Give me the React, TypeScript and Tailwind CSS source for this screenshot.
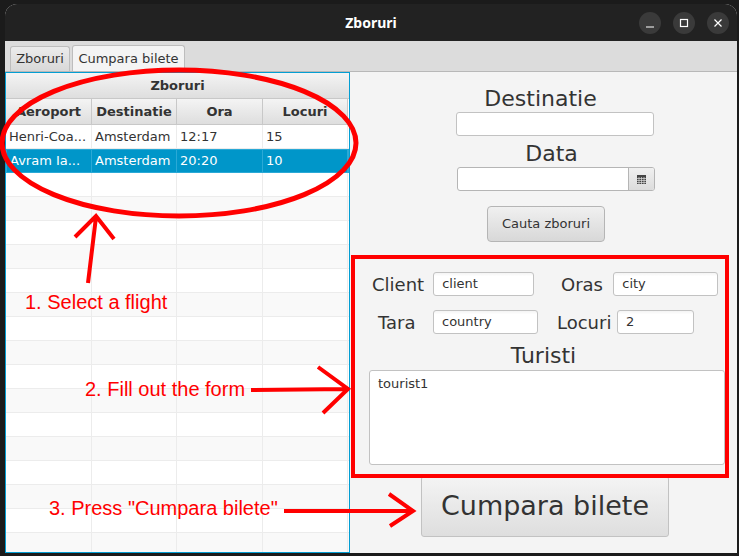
const dejavu = "font-['DejaVu_Sans',sans-serif]";

const rows = Array.from({ length: 18 });

function Field({ value, className }: { value?: string; className: string }) {
  return (
    <div className={`flex h-[24px] items-center rounded-[3px] border border-[#c2c2c2] bg-white bg-gradient-to-b from-[#f4f4f4] to-white to-[15%] pl-[8px] text-[13px] text-[#333] ${className}`}>
      {value}
    </div>
  );
}

function HeaderCell({ children, w }: { children: string; w: string }) {
  return (
    <div className={`flex h-full items-center justify-center overflow-hidden whitespace-nowrap border-r border-b border-[#c8c8c8] bg-gradient-to-b from-[#f4f4f4] to-[#dedede] text-[13px] font-bold text-[#333] ${w}`}>
      {children}
    </div>
  );
}

function Cell({ children, w, sel }: { children?: string; w: string; sel?: boolean }) {
  return (
    <div className={`flex h-full items-center whitespace-nowrap border-r pl-[3px] text-[13px] ${w} ${sel ? "border-[#2aa9d6] text-white" : "border-[#ececec] text-[#333]"}`}>
      {children}
    </div>
  );
}

const cols = ["w-[86px]", "w-[85px]", "w-[86px]", "w-[85px]"];

function Annotations() {
  return (
    <>
      <svg className="pointer-events-none absolute left-0 top-0" width="739" height="556" fill="none" stroke="#ff0000" strokeWidth="4">
        <ellipse cx="179" cy="143" rx="177" ry="73" strokeWidth="5" />
        <path d="M88 283 L96 217 M75 237 L96 216 L114 239" />
        <path d="M251 390 L348 389 M318 367 L348 389 L323 413" />
        <path d="M284 511 L412 511 M389 494 L413 511 L390 526" />
        <rect x="353" y="257" width="374" height="219" />
      </svg>
      <div className="absolute left-[25px] top-[290px] font-['Liberation_Sans',sans-serif] text-[20px] leading-[24px] text-[#ff0000]">1. Select a flight</div>
      <div className="absolute left-[85px] top-[377px] font-['Liberation_Sans',sans-serif] text-[20px] leading-[24px] text-[#ff0000]">2. Fill out the form</div>
      <div className="absolute left-[49px] top-[496px] font-['Liberation_Sans',sans-serif] text-[20px] leading-[24px] text-[#ff0000]">3. Press "Cumpara bilete"</div>
    </>
  );
}

export default function App() {
  return (
    <div className={`relative h-[556px] w-[739px] overflow-hidden bg-[#1b1b1b] pl-[5px] pr-[2px] pt-[4px] pb-[3px] ${dejavu}`}>
      <div className="flex h-full w-full flex-col overflow-hidden rounded-t-[12px] bg-[#f4f4f4]">
        <div className="relative flex h-[37px] items-center justify-center bg-[#222222] font-['Noto_Sans',sans-serif] text-[14px] font-bold text-white">
          Zboruri
          <div className="absolute right-[8px] top-[8px] flex gap-[12px]">
            <div className="flex h-[22px] w-[22px] items-center justify-center rounded-full bg-[#3a3a3a]">
              <svg width="10" height="10" viewBox="0 0 10 10"><path d="M1 9h8" stroke="#fff" strokeWidth="1.2" /></svg>
            </div>
            <div className="flex h-[22px] w-[22px] items-center justify-center rounded-full bg-[#3a3a3a]">
              <svg width="10" height="10" viewBox="0 0 10 10" fill="none"><rect x="1.5" y="1.5" width="7" height="7" stroke="#fff" strokeWidth="1.2" /></svg>
            </div>
            <div className="flex h-[22px] w-[22px] items-center justify-center rounded-full bg-[#3a3a3a]">
              <svg width="10" height="10" viewBox="0 0 10 10" fill="none"><path d="M1.5 1.5l7 7M8.5 1.5l-7 7" stroke="#fff" strokeWidth="1.2" /></svg>
            </div>
          </div>
        </div>
        <div className="flex h-[31px] items-end gap-[2px] border-b border-[#b8b8b8] bg-[#dcdcdc] pl-[5px]">
          <div className="flex h-[25px] w-[60px] items-center justify-center rounded-t-[3px] border border-b-0 border-[#bdbdbd] bg-gradient-to-b from-[#ececec] to-[#d8d8d8] text-[13px] text-[#333]">Zboruri</div>
          <div className="flex h-[26px] w-[113px] items-center justify-center rounded-t-[3px] border border-b-0 border-[#bdbdbd] bg-[#f4f4f4] text-[13px] text-[#333]">Cumpara bilete</div>
        </div>
        <div className="flex min-h-0 flex-1">
          <div className="flex h-full w-[345px] shrink-0 flex-col overflow-hidden border border-[#039ed3] bg-white">
            <div className="flex h-[26px] shrink-0 items-center justify-center border-b border-[#c8c8c8] bg-gradient-to-b from-[#f4f4f4] to-[#dedede] text-[13px] font-bold text-[#333]">Zboruri</div>
            <div className="flex h-[26px] shrink-0">
              <HeaderCell w={cols[0]}>Aeroport</HeaderCell>
              <HeaderCell w={cols[1]}>Destinatie</HeaderCell>
              <HeaderCell w={cols[2]}>Ora</HeaderCell>
              <HeaderCell w={cols[3]}>Locuri</HeaderCell>
            </div>
            <div className="flex h-[24px] shrink-0 border-b border-[#ececec]">
              <Cell w={cols[0]}>Henri-Coa...</Cell>
              <Cell w={cols[1]}>Amsterdam</Cell>
              <Cell w={cols[2]}>12:17</Cell>
              <Cell w={cols[3]}>15</Cell>
            </div>
            <div className="flex h-[24px] shrink-0 border border-[#2aa9d6] bg-[#0096c9]">
              <Cell w="w-[85px]" sel>Avram Ia...</Cell>
              <Cell w={cols[1]} sel>Amsterdam</Cell>
              <Cell w={cols[2]} sel>20:20</Cell>
              <Cell w={cols[3]} sel>10</Cell>
            </div>
            {rows.map((_, i) => (
              <div key={i} className={`flex h-[24px] shrink-0 border-b border-[#ececec] ${i % 2 === 1 ? "bg-[#f9f9f9]" : "bg-white"}`}>
                {cols.map((c) => <Cell key={c} w={c} />)}
              </div>
            ))}
          </div>
          <div className="flex min-w-0 flex-1 flex-col text-[#333]">
            <div className="mt-[14px] text-center text-[22px] leading-[26px] pr-[6px]">Destinatie</div>
            <div className="mt-[0px] ml-[106px] h-[24px] w-[198px] rounded-[3px] border border-[#c2c2c2] bg-white" />
            <div className="mt-[5px] text-center text-[22px] leading-[26px] pl-[16px]">Data</div>
            <div className="ml-[107px] flex h-[24px] w-[198px] overflow-hidden rounded-[3px] border border-[#b5b5b5] bg-white">
              <div className="flex-1" />
              <div className="flex w-[26px] items-center justify-center border-l border-[#b5b5b5] bg-gradient-to-b from-[#f0f0f0] to-[#dcdcdc]">
                <svg width="9" height="9" viewBox="0 0 9 9"><rect width="9" height="9" fill="#444" /><path d="M0 3.5h9M0 5.5h9M0 7.5h9M2 2v7M4.5 2v7M7 2v7" stroke="#ddd" strokeWidth="0.7" /></svg>
              </div>
            </div>
            <div className="ml-[137px] mt-[15px] flex h-[36px] w-[118px] items-center justify-center rounded-[4px] border border-[#b5b5b5] bg-gradient-to-b from-[#f0f0f0] to-[#d8d8d8] text-[13px]">Cauta zboruri</div>
            <div className="mt-[11px] flex flex-col px-[19px] pt-[19px]">
              <div className="flex h-[24px] items-center text-[18px]">
                <span className="ml-[3px] w-[62px]">Client</span>
                <Field value="client" className="w-[102px]" />
                <span className="ml-[27px] w-[53px]">Oras</span>
                <Field value="city" className="w-[106px]" />
              </div>
              <div className="mt-[14px] flex h-[24px] items-center text-[18px]">
                <span className="ml-[9px] w-[55px]">Tara</span>
                <Field value="country" className="w-[105px]" />
                <span className="ml-[19px] w-[60px]">Locuri</span>
                <Field value="2" className="w-[77px]" />
              </div>
              <div className="mt-[9px] text-center text-[22px] leading-[26px]">Turisti</div>
              <div className="mt-[1px] h-[95px] w-[356px] rounded-[3px] border border-[#c2c2c2] bg-white pl-[8px] pt-[3px] text-[13px]">tourist1</div>
            </div>
            <div className="ml-[71px] mt-[11px] flex h-[61px] w-[248px] items-center justify-center rounded-[3px] border border-[#c2c2c2] bg-gradient-to-b from-[#f4f4f4] to-[#dedede] text-[27px]">Cumpara bilete</div>
          </div>
        </div>
      </div>
      <Annotations />
    </div>
  );
}
